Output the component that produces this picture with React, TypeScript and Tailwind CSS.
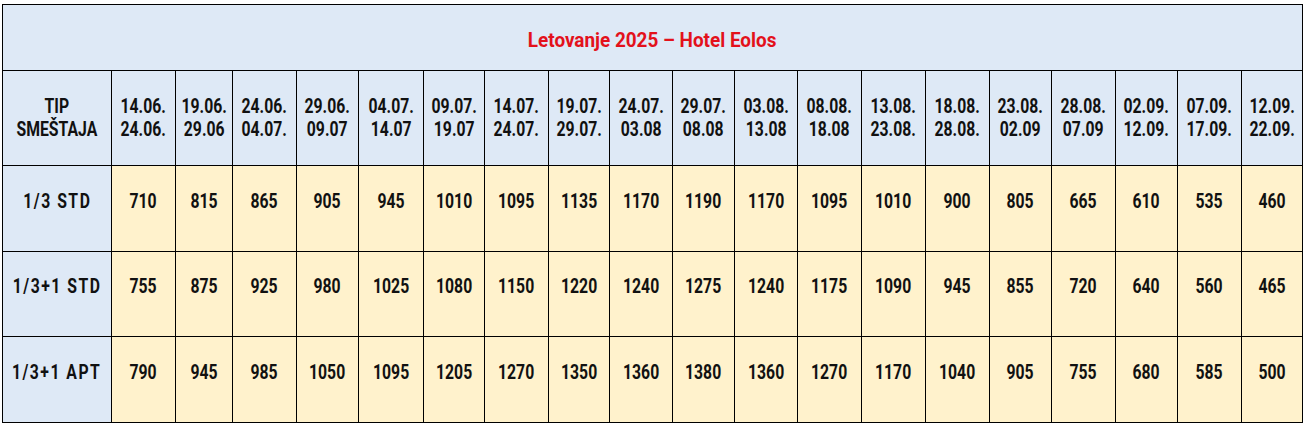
import React from "react";

const dates: [string, string][] = [
  ["14.06.", "24.06."],
  ["19.06.", "29.06"],
  ["24.06.", "04.07."],
  ["29.06.", "09.07"],
  ["04.07.", "14.07"],
  ["09.07.", "19.07"],
  ["14.07.", "24.07."],
  ["19.07.", "29.07."],
  ["24.07.", "03.08"],
  ["29.07.", "08.08"],
  ["03.08.", "13.08"],
  ["08.08.", "18.08"],
  ["13.08.", "23.08."],
  ["18.08.", "28.08."],
  ["23.08.", "02.09"],
  ["28.08.", "07.09"],
  ["02.09.", "12.09."],
  ["07.09.", "17.09."],
  ["12.09.", "22.09."],
];

const widths = [109, 64, 57, 64, 62, 65, 61, 64, 61, 63, 62, 63, 64, 64, 64, 62, 64, 62, 64, 61];

const rows: { name: string; prices: number[] }[] = [
  {
    name: "1/3 STD",
    prices: [710, 815, 865, 905, 945, 1010, 1095, 1135, 1170, 1190, 1170, 1095, 1010, 900, 805, 665, 610, 535, 460],
  },
  {
    name: "1/3+1 STD",
    prices: [755, 875, 925, 980, 1025, 1080, 1150, 1220, 1240, 1275, 1240, 1175, 1090, 945, 855, 720, 640, 560, 465],
  },
  {
    name: "1/3+1 APT",
    prices: [790, 945, 985, 1050, 1095, 1205, 1270, 1350, 1360, 1380, 1360, 1270, 1170, 1040, 905, 755, 680, 585, 500],
  },
];

// condensed look: the reference uses a narrow DIN-like face
function Narrow({ children, className = "" }: { children: React.ReactNode; className?: string }) {
  return (
    <div className="flex justify-center">
      <span className={`inline-block whitespace-nowrap ${className}`}>{children}</span>
    </div>
  );
}

export default function App() {
  return (
    <div
      className="pl-[2px] pt-[4px] text-[#111]"
      style={{ fontFamily: 'Roboto, "Liberation Sans", sans-serif' }}
    >
      <table className="table-fixed border-collapse w-[1300px] font-bold text-[21px]">
        <colgroup>
          {widths.map((w, i) => (
            <col key={i} style={{ width: w }} />
          ))}
        </colgroup>
        <tbody>
          <tr className="h-[66px]">
            <td colSpan={20} className="border border-black bg-[#dee9f6] text-[#e3111b] pt-[6px]">
              <Narrow className="scale-x-[0.9]">Letovanje 2025 – Hotel Eolos</Narrow>
            </td>
          </tr>
          <tr className="h-[95px]">
            <td className="border border-black bg-[#dee9f6] leading-[23px]">
              <Narrow className="text-center scale-x-[0.75]">
                TIP
                <br />
                SMEŠTAJA
              </Narrow>
            </td>
            {dates.map(([a, b], i) => (
              <td key={i} className="border border-black bg-[#dee9f6] leading-[23px]">
                <Narrow className="text-center scale-x-[0.75]">
                  {a}
                  <br />
                  {b}
                </Narrow>
              </td>
            ))}
          </tr>
          {rows.map((r, ri) => (
            <tr key={r.name} className={ri === 1 ? "h-[85px]" : "h-[86px]"}>
              <td className="border border-black bg-[#dee9f6] pb-[14px]">
                <Narrow className="tracking-[2px] scale-x-[0.75]">{r.name}</Narrow>
              </td>
              {r.prices.map((p, i) => (
                <td key={i} className="border border-black bg-[#fff2cc] pb-[14px]">
                  <Narrow className="scale-x-[0.75]">{p}</Narrow>
                </td>
              ))}
            </tr>
          ))}
        </tbody>
      </table>
    </div>
  );
}
